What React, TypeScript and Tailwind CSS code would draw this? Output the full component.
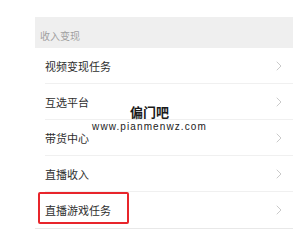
import React from 'react';

const rows = ['视频变现任务', '互选平台', '带货中心', '直播收入', '直播游戏任务'];

const Chevron = () => (
  <svg width="6" height="10" viewBox="0 0 6 10" fill="none">
    <path d="M1 1l4 4-4 4" stroke="#cacaca" strokeWidth="1" strokeLinecap="round" strokeLinejoin="round" />
  </svg>
);

export default function App() {
  return (
    <div
      className="relative w-[303px] h-[238px] bg-white overflow-hidden pt-[17px] pl-[35px]"
      style={{ fontFamily: '"Noto Sans CJK SC", "Liberation Sans", sans-serif' }}
    >
      <div className="w-[258px]">
        <div className="h-[31px] bg-[#efefef] flex items-center pl-[5px] pt-[6px]">
          <span className="text-[10px] text-[#a0a0a0] leading-none">收入变现</span>
        </div>
        <div className="bg-white rounded-t-[3px] border-b border-[#e8e8e8]">
          {rows.map((r, i) => (
            <div key={r} className="relative h-[36px] flex items-center pl-[10px] pr-[11px]">
              <span className="flex-1 text-[11px] text-[#2e2e2e] leading-none">{r}</span>
              <Chevron />
              {i < rows.length - 1 && (
                <div className="absolute left-[10px] right-0 bottom-0 h-px bg-[#f0f0f0]" />
              )}
              {i === rows.length - 1 && (
                <div className="absolute left-[3px] top-0 w-[91px] h-[32px] border-2 border-[#e8252b] rounded-[2px]" />
              )}
            </div>
          ))}
        </div>
      </div>
      <div className="absolute left-0 right-0 top-[105px] flex flex-col items-center">
        <span className="text-[13px] font-bold text-[#1a1a1a] leading-none ml-[-4px]">偏门吧</span>
        <span
          className="mt-[4px] text-[10px] text-[#222] tracking-[1.1px] leading-none ml-[-4px]"
          style={{ fontFamily: '"Liberation Sans", sans-serif' }}
        >
          www.pianmenwz.com
        </span>
      </div>
    </div>
  );
}
